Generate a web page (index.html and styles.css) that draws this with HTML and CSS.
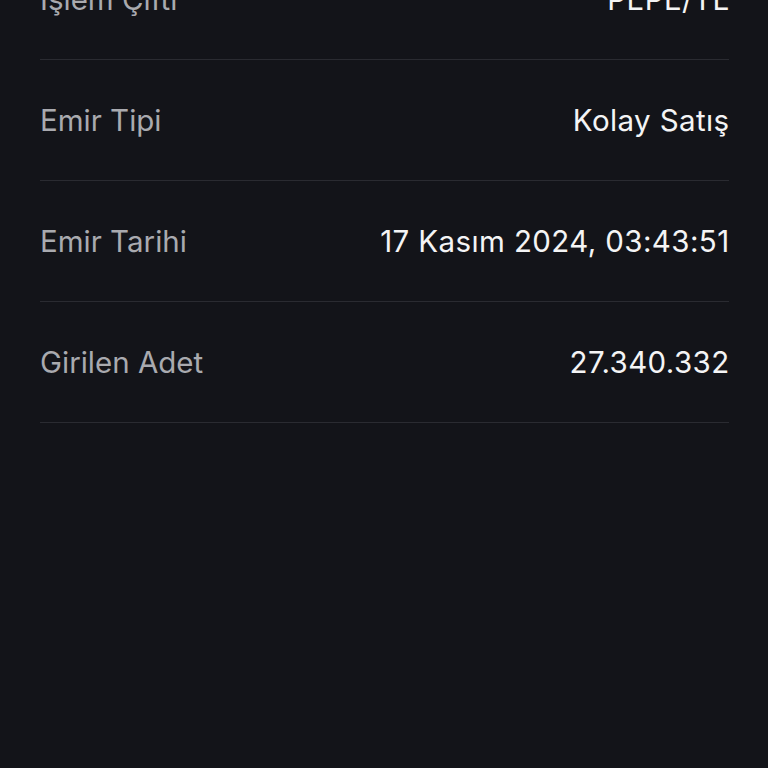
FILE: index.html
```html
<!DOCTYPE html>
<html lang="tr">
<head>
    <meta charset="UTF-8">
    <meta name="viewport" content="width=device-width, initial-scale=1.0">
    <title>Emir Detayı</title>
    <link rel="stylesheet" href="styles.css">
</head>
<body>
    <div class="details">
        <div class="row">
            <span class="label">İşlem Çifti</span>
            <span class="value">PEPE/TL</span>
        </div>
        <div class="row">
            <span class="label">Emir Tipi</span>
            <span class="value">Kolay Satış</span>
        </div>
        <div class="row">
            <span class="label">Emir Tarihi</span>
            <span class="value">17 Kasım 2024, 03:43:51</span>
        </div>
        <div class="row">
            <span class="label">Girilen Adet</span>
            <span class="value">27.340.332</span>
        </div>
    </div>
</body>
</html>
```

FILE: styles.css
```css
:root {
    --bg: #131419;
    --divider: #2a2b31;
    --label: #a9aaaf;
    --value: #f4f4f5;
}

html, body {
    margin: 0;
    height: 100%;
    background-color: var(--bg);
}

body {
    font-family: Inter, "Noto Sans", sans-serif;
    overflow: hidden;
}

.details {
    margin-top: -61px;
    padding: 0 39px 0 40px;
}

.row {
    height: 120px;
    display: flex;
    align-items: center;
    justify-content: space-between;
    border-bottom: 1px solid var(--divider);
    font-size: 29.5px;
}

.label {
    color: var(--label);
}

.value {
    color: var(--value);
    letter-spacing: 0.4px;
    margin-right: -0.6px;
}
```
